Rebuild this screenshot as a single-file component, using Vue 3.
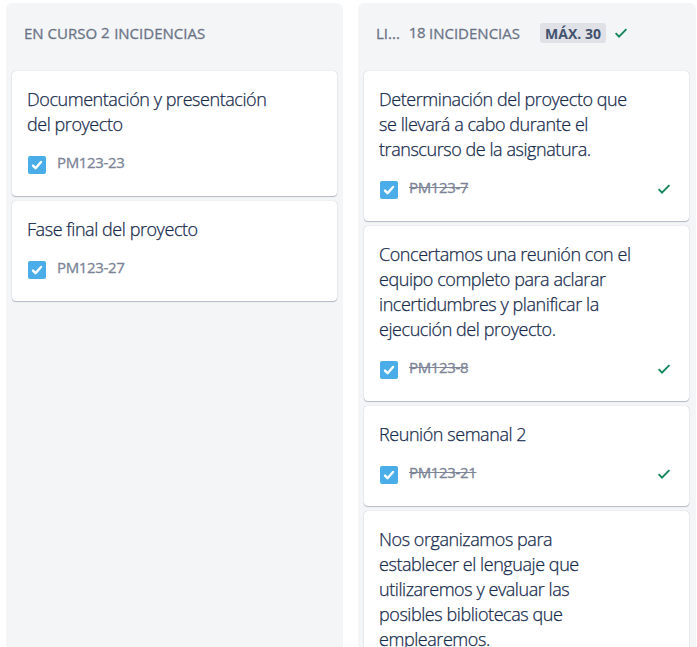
<script setup>
const columns = [
  {
    name: 'EN CURSO',
    count: 2,
    cards: [
      { key: 'PM123-23', lines: ['Documentación y presentación', 'del proyecto'] },
      { key: 'PM123-27', lines: ['Fase final del proyecto'] },
    ],
  },
  {
    name: 'LI...',
    count: 18,
    max: 30,
    done: true,
    cards: [
      { key: 'PM123-7', lines: ['Determinación del proyecto que', 'se llevará a cabo durante el', 'transcurso de la asignatura.'] },
      { key: 'PM123-8', lines: ['Concertamos una reunión con el', 'equipo completo para aclarar', 'incertidumbres y planificar la', 'ejecución del proyecto.'] },
      { key: 'PM123-21', lines: ['Reunión semanal 2'] },
      { key: '', lines: ['Nos organizamos para', 'establecer el lenguaje que', 'utilizaremos y evaluar las', 'posibles bibliotecas que', 'emplearemos.'] },
    ],
  },
]
</script>

<template>
  <main class="board">
    <section v-for="col in columns" :key="col.name" class="column" :class="{ done: col.done }">
      <header class="head">
        <span class="name">{{ col.name }}</span>
        <span class="count">{{ col.count }}</span>
        <span class="label">INCIDENCIAS</span>
        <span v-if="col.max" class="max">MÁX. {{ col.max }}</span>
        <svg v-if="col.done" class="tick" viewBox="0 0 14 12"><path d="M1.6 6.2 5 9.6 12.4 2.2" /></svg>
      </header>
      <article v-for="card in col.cards" :key="card.key" class="card">
        <div class="title">
          <div v-for="line in card.lines" :key="line" class="line">{{ line }}</div>
        </div>
        <footer v-if="card.key" class="foot">
          <svg class="box" viewBox="0 0 18 18">
            <rect width="18" height="18" rx="2" fill="#4bade8" />
            <path d="M5 9.6 7.6 12.2 13 6" fill="none" stroke="#fff" stroke-width="2.4" stroke-linecap="round" stroke-linejoin="round" />
          </svg>
          <span class="key">{{ card.key }}</span>
          <svg v-if="col.done" class="tick" viewBox="0 0 14 12"><path d="M1.6 6.2 5 9.6 12.4 2.2" /></svg>
        </footer>
      </article>
    </section>
  </main>
</template>

<style>
body {
  background: #fff;
  overflow: hidden;
}
</style>

<style scoped>
.board {
  box-sizing: border-box;
  height: 647px;
  overflow: hidden;
  display: flex;
  gap: 15px;
  padding: 3px 1px 0 6px;
  font-family: "Open Sans", "Noto Sans", sans-serif;
}
.column {
  box-sizing: border-box;
  width: 337px;
  flex: none;
  display: flex;
  flex-direction: column;
  gap: 5px;
  padding: 0 6px;
  border-radius: 6px 6px 0 0;
  background: #f4f5f7;
}
.column.done {
  width: 338px;
  padding-right: 7px;
}
.head {
  box-sizing: border-box;
  flex: none;
  display: flex;
  align-items: center;
  height: 63px;
  padding: 0 0 3px 12px;
  font-size: 15px;
  color: #6b7487;
  -webkit-text-stroke: 0.3px #6b7487;
  white-space: nowrap;
}
.count {
  margin: -2px 5px 0 4px;
  letter-spacing: -0.5px;
}
.done .count {
  margin-left: 9px;
}
.done .label {
  margin-left: -1px;
}
.max {
  margin-left: 20px;
  width: 66px;
  text-align: center;
  height: 20px;
  line-height: 21px;
  font-size: 14px;
  border-radius: 3px;
  background: #dfe1e6;
  color: #42526e;
  font-weight: 700;
  -webkit-text-stroke: 0;
}
.head .tick {
  margin-left: 8px;
}
.tick {
  width: 14px;
  height: 12px;
  fill: none;
  stroke: #14875a;
  stroke-width: 1.9;
}
.card {
  box-sizing: border-box;
  flex: none;
  padding: 16px 18px 22px 15px;
  border-radius: 4px;
  background: #fff;
  box-shadow: 0 1px 1px rgba(9, 30, 66, 0.25), 0 0 1px rgba(9, 30, 66, 0.25);
}
.line {
  height: 25px;
  line-height: 25px;
  font-size: 18px;
  font-weight: 300;
  letter-spacing: -0.44px;
  color: #172b4d;
  -webkit-text-stroke: 0.25px #172b4d;
  white-space: nowrap;
}
.foot {
  display: flex;
  align-items: center;
  height: 18px;
  margin-top: 19px;
  padding-left: 1px;
}
.box {
  width: 18px;
  height: 18px;
}
.key {
  margin: -6px auto 0 11px;
  font-size: 15px;
  letter-spacing: -0.35px;
  color: #7c8496;
  -webkit-text-stroke: 0.3px #7c8496;
}
.foot .tick {
  margin-top: -2px;
}
.done .key {
  text-decoration: line-through;
}
</style>
